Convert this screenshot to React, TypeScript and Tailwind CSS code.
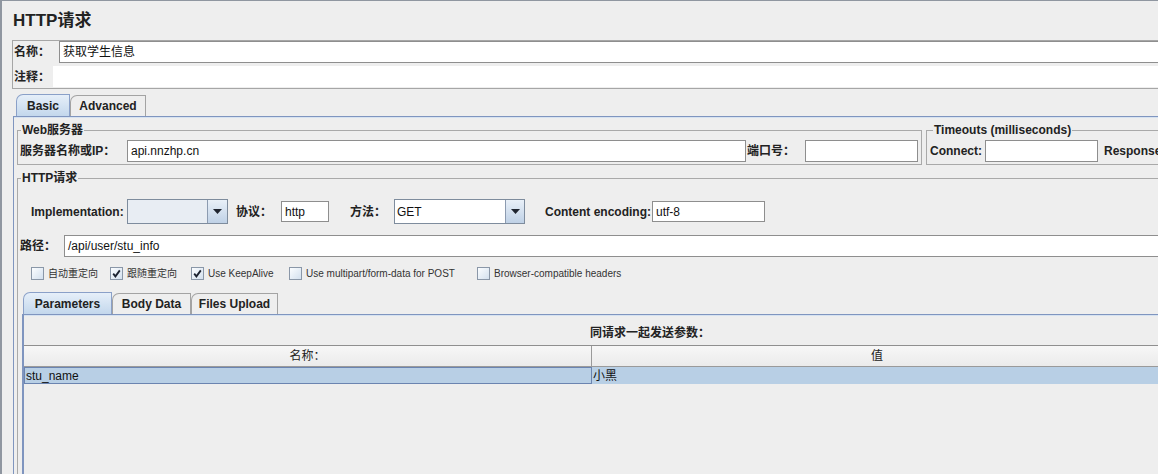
import React from "react";

const label = "text-[12px] font-bold leading-none text-[#222] whitespace-nowrap";

function Field({ className = "", value = "" }: { className?: string; value?: string }) {
  return (
    <div
      className={`flex items-center border border-[#8e8e8e] bg-white px-[3px] text-[12px] text-[#111] whitespace-nowrap ${className}`}
    >
      {value}
    </div>
  );
}

function Combo({ w, fieldW, value = "", fieldBg }: { w: string; fieldW: string; value?: string; fieldBg: string }) {
  return (
    <div className={`flex h-[25px] border border-[#7e8c9d] ${w}`}>
      <div className={`flex items-center px-[2px] text-[12px] text-[#111] ${fieldW} ${fieldBg}`}>{value}</div>
      <div className="flex flex-1 items-center justify-center border-l border-[#8c9bb0] bg-gradient-to-b from-[#e9f0f8] to-[#bfd1e6]">
        <svg width="9" height="5" viewBox="0 0 9 5">
          <path d="M0 0 H9 L4.5 5 Z" fill="#1f2530" />
        </svg>
      </div>
    </div>
  );
}

function Check({ checked, text, w }: { checked?: boolean; text: string; w: string }) {
  return (
    <div className={`flex items-center ${w}`}>
      <div className="flex h-[13px] w-[13px] items-center justify-center border border-[#8a97a8] bg-gradient-to-br from-[#fbfdff] to-[#d3e0ee]">
        {checked && (
          <svg width="9" height="9" viewBox="0 0 9 9">
            <path d="M1.2 4.6 L3.4 7.4 L7.8 1.4" stroke="#1c2230" strokeWidth="1.8" fill="none" />
          </svg>
        )}
      </div>
      <span className="ml-[4px] text-[10px] leading-none text-[#333] whitespace-nowrap">{text}</span>
    </div>
  );
}

function Tab({ text, active, w }: { text: string; active?: boolean; w: string }) {
  return (
    <div
      className={`flex items-center justify-center rounded-tl-[7px] border border-b-0 text-[12px] font-bold text-[#222] ${w} ${
        active
          ? "h-[22px] border-[#8aa0c8] bg-gradient-to-b from-[#e6eff9] to-[#c3d7ec]"
          : "h-[21px] border-[#a3a3a3] bg-[#eeeeee]"
      }`}
    >
      {text}
    </div>
  );
}

export default function App() {
  return (
    <div className="h-[474px] w-[1158px] overflow-hidden border-l-2 border-t border-[#8f96a0] bg-[#eeeeee] font-['Liberation_Sans','Noto_Sans_CJK_SC',sans-serif] text-[#222]">
      <div className="w-[1340px]">
        <div className="h-[39px] pl-[11px] pt-[10px] text-[17px] font-bold leading-[20px] text-[#222]">HTTP请求</div>

        {/* name / comment */}
        <div className="ml-[10px] border border-[#a6a6a6] pb-[1px] pl-[1px]">
          <div className="flex h-[22px] items-center">
            <span className={`${label} w-[45px]`}>名称：</span>
            <Field className="h-[22px] flex-1" value="获取学生信息" />
          </div>
          <div className="mt-[3px] flex h-[21px] items-center">
            <span className={`${label} w-[39px]`}>注释：</span>
            <div className="h-[21px] flex-1 bg-white" />
          </div>
        </div>

        {/* main tabs */}
        <div className="ml-[14px] mt-[5px] flex items-end">
          <Tab text="Basic" active w="w-[54px]" />
          <Tab text="Advanced" w="w-[76px]" />
        </div>

        <div className="ml-[11px] h-[400px] border-l border-t border-[#7f95bf]">
          <div className="h-[1px] bg-[#d6e2f0]" />
          <div className="ml-[3px] mt-[6px] flex">
            <fieldset className="border border-[#a9a9a9] pb-[2px] pl-[2px] pr-[3px]">
              <legend className={`${label} ml-[1px] px-[1px] leading-[14px]`}>Web服务器</legend>
              <div className="mt-[4px] flex h-[22px] items-center">
                <span className={`${label} w-[107px]`}>服务器名称或IP：</span>
                <Field className="h-[22px] w-[619px]" value="api.nnzhp.cn" />
                <span className={`${label} ml-[1px] w-[58px]`}>端口号：</span>
                <Field className="h-[22px] w-[113px]" />
              </div>
            </fieldset>
            <fieldset className="ml-[4px] border border-[#a9a9a9] pb-[2px] pl-[3px] pr-[3px]">
              <legend className={`${label} ml-[3px] px-[1px] leading-[14px]`}>Timeouts (milliseconds)</legend>
              <div className="mt-[4px] flex h-[22px] items-center">
                <span className={`${label} w-[55px]`}>Connect:</span>
                <Field className="h-[22px] w-[113px]" />
                <span className={`${label} ml-[6px] w-[64px]`}>Response:</span>
                <Field className="h-[22px] w-[113px]" />
              </div>
            </fieldset>
          </div>

          <fieldset className="ml-[3px] mt-[7px] h-[320px] border border-[#a9a9a9] pl-[2px]">
            <legend className={`${label} ml-[1px] px-[1px] leading-[14px]`}>HTTP请求</legend>
            <div className="mt-[15px] flex h-[25px] items-center pl-[11px]">
              <span className={`${label} w-[96px]`}>Implementation:</span>
              <Combo w="w-[101px]" fieldW="w-[79px]" fieldBg="bg-[#e8edf3]" />
              <span className={`${label} ml-[8px] w-[45px]`}>协议：</span>
              <Field className="h-[21px] w-[48px]" value="http" />
              <span className={`${label} ml-[21px] w-[44px]`}>方法：</span>
              <Combo w="w-[131px]" fieldW="w-[110px]" value="GET" fieldBg="bg-white" />
              <span className={`${label} ml-[20px] w-[107px]`}>Content encoding:</span>
              <Field className="h-[21px] w-[113px]" value="utf-8" />
            </div>

            <div className="mt-[11px] flex h-[22px] items-center">
              <span className={`${label} w-[44px]`}>路径：</span>
              <Field className="h-[22px] flex-1" value="/api/user/stu_info" />
            </div>

            <div className="mt-[10px] flex h-[13px] items-center pl-[11px]">
              <Check text="自动重定向" w="w-[79px]" />
              <Check text="跟随重定向" checked w="w-[81px]" />
              <Check text="Use KeepAlive" checked w="w-[98px]" />
              <Check text="Use multipart/form-data for POST" w="w-[188px]" />
              <Check text="Browser-compatible headers" w="w-[200px]" />
            </div>

            <div className="ml-[3px] mt-[12px] flex items-end">
              <Tab text="Parameters" active w="w-[89px]" />
              <Tab text="Body Data" w="w-[79px]" />
              <Tab text="Files Upload" w="w-[87px]" />
            </div>
            <div className="ml-[2px] h-[200px] border-l-2 border-t border-[#7f95bf]">
              <div className="h-[1px] bg-[#d6e2f0]" />
              <div className="flex h-[29px] w-[1252px] items-center justify-center pt-[4px]">
                <span className={label}>同请求一起发送参数：</span>
              </div>
              <div className="w-[1138px] border-t border-[#8f8f8f]">
                <div className="flex h-[21px] border-b border-[#9a9a9a] bg-gradient-to-b from-[#f7f7f7] to-[#ebebeb] text-[12px] text-[#222]">
                  <div className="flex w-[568px] items-center justify-center border-r border-[#9a9a9a]">名称：</div>
                  <div className="flex flex-1 items-center justify-center">值</div>
                </div>
                <div className="flex h-[17px] bg-[#b8cfe5] text-[12px] text-[#111]">
                  <div className="flex w-[568px] items-center border border-[#6b84b0] px-[1px]">stu_name</div>
                  <div className="flex flex-1 items-center px-[1px]">小黑</div>
                </div>
              </div>
            </div>
          </fieldset>
        </div>
      </div>
    </div>
  );
}
